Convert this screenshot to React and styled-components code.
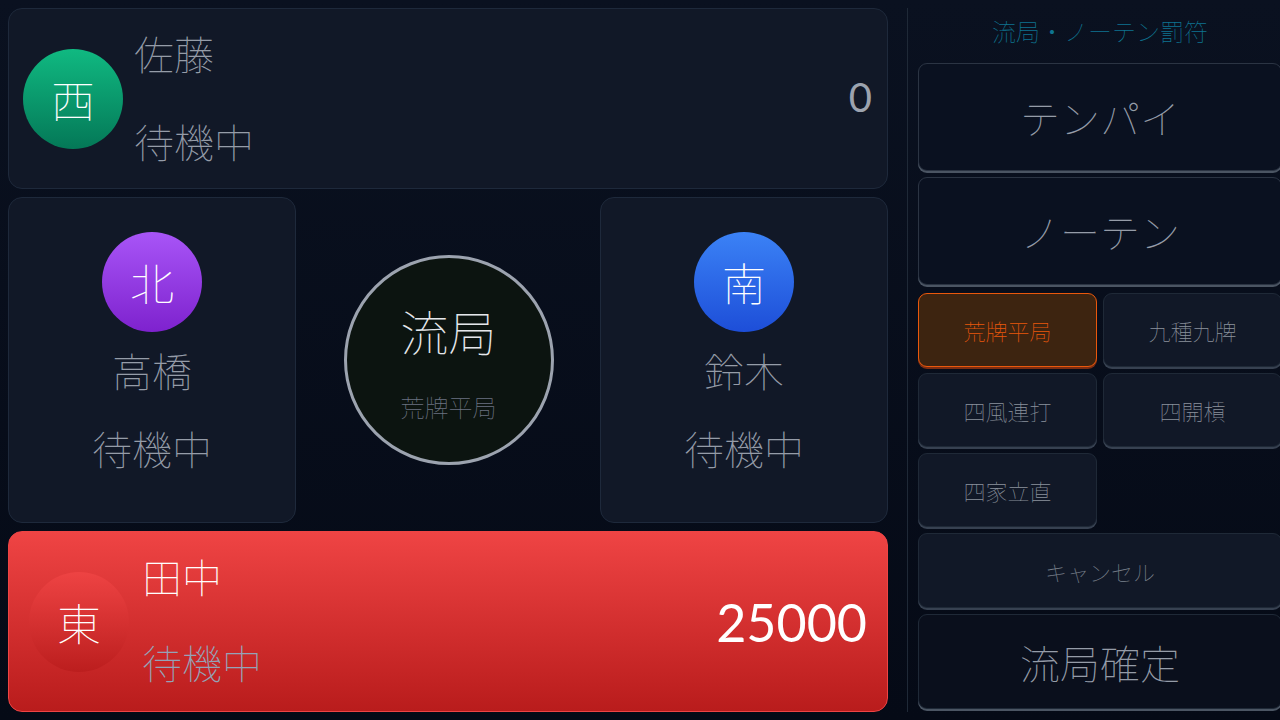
import React from "react";
import styled, { createGlobalStyle } from "styled-components";

// Draw-result (流局) screen for a four-player mahjong table

const GlobalStyle = createGlobalStyle`
    html, body {
        margin: 0;
        padding: 0;
        height: 100%;
        overflow: hidden;
    }
    body {
        background: linear-gradient(180deg, #0a1120 0%, #050a16 100%);
        font-family: "Noto Sans CJK JP", "Noto Sans", sans-serif;
        font-weight: 100;
        color: #9ca3af;
    }
`;

const seatColors = {
    east: ["#ef4444", "#c42020"],
    south: ["#3b82f6", "#1d4ed8"],
    west: ["#10b981", "#047857"],
    north: ["#a855f7", "#7e22ce"],
};

const players = {
    west: { wind: "西", name: "佐藤", score: 0 },
    north: { wind: "北", name: "高橋" },
    south: { wind: "南", name: "鈴木" },
    east: { wind: "東", name: "田中", score: 25000 },
};

const specialDraws = [
    { label: "荒牌平局", active: true },
    { label: "九種九牌" },
    { label: "四風連打" },
    { label: "四開槓" },
    { label: "四家立直" },
];

const App = () => (
    <>
        <GlobalStyle />
        <Screen>
            <Table>
                <WideSeat>
                    <WindBadge seat="west">{players.west.wind}</WindBadge>
                    <SeatInfo>
                        <Name>{players.west.name}</Name>
                        <Status>待機中</Status>
                    </SeatInfo>
                    <Score>{players.west.score}</Score>
                </WideSeat>

                <MiddleRow>
                    <SideSeat>
                        <WindBadge seat="north">{players.north.wind}</WindBadge>
                        <Name>{players.north.name}</Name>
                        <Status>待機中</Status>
                    </SideSeat>
                    <CenterWrap>
                        <DrawDial>
                            <DialTitle>流局</DialTitle>
                            <DialSub>荒牌平局</DialSub>
                        </DrawDial>
                    </CenterWrap>
                    <SideSeat>
                        <WindBadge seat="south">{players.south.wind}</WindBadge>
                        <Name>{players.south.name}</Name>
                        <Status>待機中</Status>
                    </SideSeat>
                </MiddleRow>

                <WideSeat $self>
                    <WindBadge seat="east" $muted>{players.east.wind}</WindBadge>
                    <SeatInfo $self>
                        <Name $self>{players.east.name}</Name>
                        <Status $self>待機中</Status>
                    </SeatInfo>
                    <Score $self>{players.east.score}</Score>
                </WideSeat>
            </Table>

            <Divider />

            <Panel>
                <PanelTitle>流局・ノーテン罰符</PanelTitle>
                <BigButton>テンパイ</BigButton>
                <BigButton>ノーテン</BigButton>
                <DrawGrid>
                    {specialDraws.map(d => (
                        <SmallButton key={d.label} $active={d.active}>{d.label}</SmallButton>
                    ))}
                </DrawGrid>
                <CancelButton>キャンセル</CancelButton>
                <ConfirmButton>流局確定</ConfirmButton>
            </Panel>
        </Screen>
    </>
);

// Styled Components
const Screen = styled.div`
    display: flex;
    height: 720px;
    padding: 8px 0 8px 8px;
    box-sizing: border-box;
    overflow: hidden;
`;

const Table = styled.div`
    width: 880px;
    flex: none;
    display: grid;
    grid-template-rows: 181px 326px 181px;
    row-gap: 8px;
    align-content: start;
`;

const Card = styled.div`
    box-sizing: border-box;
    border: 1px solid #1e293b;
    border-radius: 14px;
    background: #111827;
`;

const WideSeat = styled(Card)`
    display: flex;
    align-items: center;
    padding: 0 15px 0 14px;
    ${p => p.$self && `
        border: 1.5px solid #ef4444;
        background: linear-gradient(180deg, #ef4444 0%, #b91c1c 100%);
        padding: 0 20px 0 20px;
    `}
`;

const WindBadge = styled.div`
    width: 100px;
    height: 100px;
    flex: none;
    border-radius: 50%;
    display: flex;
    align-items: center;
    justify-content: center;
    font-size: 44px;
    color: #fff;
    background: linear-gradient(180deg, ${p => seatColors[p.seat][0]}, ${p => seatColors[p.seat][1]});
    ${p => p.$muted && `
        background: linear-gradient(180deg, rgba(239,68,68,0.9), rgba(185,28,28,0.8));
    `}
`;

const SeatInfo = styled.div`
    display: flex;
    flex-direction: column;
    justify-content: space-between;
    height: ${p => p.$self ? "142px" : "144px"};
    margin-left: ${p => p.$self ? "13px" : "11px"};
    margin-top: ${p => p.$self ? "-6px" : "-4px"};
    flex: 1;
`;

const Name = styled.div`
    font-size: 40px;
    line-height: 56px;
    color: ${p => p.$self ? "#ffffff" : "#959ca8"};
`;

const Status = styled.div`
    font-size: 40px;
    line-height: 56px;
    color: ${p => p.$self ? "#94a3b8" : "#959ca8"};
`;

const Score = styled.div`
    font-family: "Lato", "Noto Sans", sans-serif;
    font-weight: 400;
    font-size: ${p => p.$self ? "52px" : "40px"};
    color: ${p => p.$self ? "#ffffff" : "#9ca3af"};
    margin-top: ${p => p.$self ? "0" : "-4px"};
`;

const MiddleRow = styled.div`
    display: grid;
    grid-template-columns: 288px 1fr 288px;
    column-gap: 16px;
`;

const SideSeat = styled(Card)`
    display: flex;
    flex-direction: column;
    align-items: center;
    padding-top: 34px;
    ${Name} {
        margin-top: 8px;
        line-height: 60px;
    }
    ${Status} {
        margin-top: 18px;
        line-height: 60px;
    }
`;

const CenterWrap = styled.div`
    display: flex;
    align-items: center;
    justify-content: center;
`;

const DrawDial = styled.div`
    width: 210px;
    height: 210px;
    box-sizing: border-box;
    border-radius: 50%;
    border: 3px solid #9ca3af;
    background: #0c1410;
    display: flex;
    flex-direction: column;
    align-items: center;
    justify-content: center;
    margin-left: 1px;
`;

const DialTitle = styled.div`
    font-size: 48px;
    line-height: 60px;
    color: #e5e7eb;
`;

const DialSub = styled.div`
    font-size: 24px;
    line-height: 34px;
    margin-top: 30px;
    margin-bottom: -4px;
    color: #6b7280;
`;

const Divider = styled.div`
    width: 1px;
    flex: none;
    margin: 0 10px 0 19px;
    background: #1f2937;
    height: 704px;
`;

const Panel = styled.div`
    width: 364px;
    flex: none;
    display: flex;
    flex-direction: column;
    gap: 6px;
`;

const PanelTitle = styled.div`
    text-align: center;
    font-size: 24px;
    line-height: 48px;
    color: #0e7490;
    margin-top: -1px;
    margin-bottom: 2px;
`;

const ButtonBase = styled.button`
    box-sizing: border-box;
    font-family: inherit;
    font-weight: 100;
    color: #959ca8;
    border: 1px solid #2b3443;
    border-radius: 9px;
    box-shadow: 0 2px 0 #4b5563;
    cursor: pointer;
    padding: 0;
`;

const BigButton = styled(ButtonBase)`
    height: 108px;
    font-size: 40px;
    background: #0a1120;
`;

const DrawGrid = styled.div`
    display: grid;
    grid-template-columns: 1fr 1fr;
    grid-auto-rows: 74px;
    gap: 6px;
    margin-top: 2px;
`;

const SmallButton = styled(ButtonBase)`
    font-size: 22px;
    background: ${p => p.$active ? "#3d2410" : "#111827"};
    border-color: ${p => p.$active ? "#ea580c" : "#1f2937"};
    color: ${p => p.$active ? "#ea580c" : "#8a919c"};
    box-shadow: 0 2px 0 ${p => p.$active ? "#7c2d12" : "#374151"};
`;

const CancelButton = styled(ButtonBase)`
    height: 75px;
    font-size: 22px;
    color: #7b828e;
    background: #111827;
    border-color: #1f2937;
    box-shadow: 0 2px 0 #374151;
`;

const ConfirmButton = styled(ButtonBase)`
    height: 95px;
    font-size: 40px;
    background: #0a0f1c;
    border-color: #1f2937;
`;

export default App;
